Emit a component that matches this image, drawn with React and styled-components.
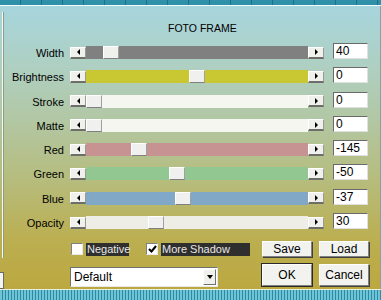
import React from "react";
import styled, { createGlobalStyle } from "styled-components";

const Global = createGlobalStyle`
  html, body { margin: 0; padding: 0; background: #3a9db4; }
  body { font-family: "Liberation Sans", Arial, sans-serif; }
`;

const Screen = styled.div`
  position: relative;
  width: 381px;
  height: 300px;
  overflow: hidden;
  display: flex;
  flex-direction: column;
`;

const TopStrip = styled.div`
  height: 5px;
  background: repeating-linear-gradient(90deg, #2f90aa 0 20px, #1d6f88 20px 21px),
    #3aa0b8;
  border-bottom: 1px solid #f4fbfc;
  flex: none;
`;

const BottomStrip = styled.div`
  height: 10px;
  flex: none;
  border-top: 1px solid #e8eedc;
  background: repeating-linear-gradient(90deg, #6fc4d6 0 2px, #2d8aa4 2px 3px),
    #3aa0b8;
`;

const Dialog = styled.div`
  position: relative;
  flex: 1;
  background: linear-gradient(
    180deg,
    #a7d5dd 0%,
    #aed0c4 20%,
    #b2c7a4 40%,
    #b6bc7c 62%,
    #bbaf52 82%,
    #bca83f 100%
  );
  border-right: 1px solid #8aa0a0;
  padding-top: 16px;
`;

const GroupEdge = styled.div`
  position: absolute;
  left: 2px;
  top: 6px;
  width: 1px;
  height: 246px;
  background: #f4f8f0;
  box-shadow: 1px 0 0 #8e9c8a;
`;

const EdgeButton = styled.div`
  position: absolute;
  left: -2px;
  top: 266px;
  width: 5px;
  height: 15px;
  background: #f4f4f0;
  border: 1px solid #6b6b60;
  border-left: none;
`;

const Title = styled.div`
  font-size: 10.5px;
  color: #000;
  margin-left: 168px;
  height: 24px;
  line-height: 12px;
`;

const Rows = styled.div`
  display: flex;
  flex-direction: column;
`;

const Row = styled.div`
  display: flex;
  align-items: flex-start;
  height: 24.3px;
`;

const Label = styled.div`
  width: 70px;
  padding-right: 6px;
  box-sizing: border-box;
  text-align: right;
  font-size: 11px;
  line-height: 14px;
  color: #000;
`;

const ScrollBar = styled.div`
  display: flex;
  align-items: center;
  width: 254px;
  height: 13px;
`;

const ArrowButton = styled.div`
  width: 16px;
  height: 12px;
  box-sizing: border-box;
  background: #f0f0ec;
  border-top: 1px solid #ffffff;
  border-left: 1px solid #ffffff;
  border-right: 1px solid #9a9a94;
  border-bottom: 2px solid #6e6e68;
  display: flex;
  align-items: center;
  justify-content: center;
  flex: none;
`;

const Tri = styled.div`
  width: 0;
  height: 0;
  border-top: 3px solid transparent;
  border-bottom: 3px solid transparent;
  ${(p) =>
    p.dir === "left"
      ? "border-right: 3px solid #000;"
      : "border-left: 3px solid #000;"}
`;

const Track = styled.div`
  position: relative;
  flex: 1;
  height: 13px;
  background: ${(p) => p.color};
`;

const Thumb = styled.div`
  position: absolute;
  top: 0;
  width: 16px;
  height: 13px;
  box-sizing: border-box;
  background: #f0f0ee;
  border-top: 1px solid #ffffff;
  border-left: 1px solid #ffffff;
  border-right: 1px solid #a0a0a0;
  border-bottom: 1px solid #808080;
`;

const ValueBox = styled.div`
  margin-left: 9px;
  margin-top: -3px;
  width: 35px;
  height: 16px;
  box-sizing: border-box;
  background: #fff;
  border-top: 1px solid #6a6a6a;
  border-left: 1px solid #6a6a6a;
  border-right: 1px solid #e0e0e0;
  border-bottom: 1px solid #e0e0e0;
  font-size: 12px;
  line-height: 14px;
  padding-left: 2px;
  color: #000;
`;

const Lower = styled.div`
  display: grid;
  grid-template-columns: 185px 50px 50px;
  grid-template-rows: 16px 22px;
  column-gap: 7px;
  row-gap: 7px;
  margin-left: 70px;
  margin-top: 1px;
`;

const Checks = styled.div`
  display: flex;
  align-items: center;
`;

const CheckBox = styled.div`
  width: 12px;
  height: 12px;
  box-sizing: border-box;
  margin-left: ${(p) => p.ml || 1}px;
  background: #fff;
  border-top: 1px solid #808080;
  border-left: 1px solid #808080;
  border-right: 1px solid #e8e8e8;
  border-bottom: 1px solid #e8e8e8;
  display: flex;
  align-items: center;
  justify-content: center;
`;

const CheckLabel = styled.div`
  margin-left: ${(p) => p.ml || 3}px;
  width: ${(p) => p.w}px;
  height: 13px;
  background: #2f2f2d;
  color: #e8e8e8;
  font-size: 11px;
  line-height: 13px;
  padding-left: 1px;
  box-sizing: border-box;
  white-space: nowrap;
`;

const Button = styled.div`
  box-sizing: border-box;
  height: ${(p) => (p.big ? 22 : 16)}px;
  background: #f2f2ee;
  border-top: 1px solid #ffffff;
  border-left: 1px solid #ffffff;
  border-right: 1px solid #808080;
  border-bottom: 1px solid #808080;
  box-shadow: ${(p) =>
    p.primary ? "0 0 0 1px #2a2a2a" : "1px 1px 0 #404040"};
  font-size: 12px;
  display: flex;
  align-items: center;
  justify-content: center;
  color: #000;
`;

const Select = styled.div`
  align-self: end;
  margin-bottom: -1px;
  width: 148px;
  height: 20px;
  box-sizing: border-box;
  background: #fff;
  border-top: 1px solid #707070;
  border-left: 1px solid #707070;
  border-right: 1px solid #e8e8e8;
  border-bottom: 1px solid #e8e8e8;
  display: flex;
  align-items: center;
  font-size: 12px;
  padding-left: 3px;
  color: #000;
`;

const SelectText = styled.span`
  flex: 1;
`;

const SelectArrow = styled.div`
  width: 13px;
  height: 16px;
  box-sizing: border-box;
  margin-right: 1px;
  background: #f0f0ec;
  border-top: 1px solid #fff;
  border-left: 1px solid #fff;
  border-right: 1px solid #707070;
  border-bottom: 1px solid #707070;
  display: flex;
  align-items: center;
  justify-content: center;
`;

const Down = styled.div`
  width: 0;
  height: 0;
  border-left: 3.5px solid transparent;
  border-right: 3.5px solid transparent;
  border-top: 4px solid #000;
`;

const sliders = [
  { label: "Width", color: "#808080", pos: 17, value: "40" },
  { label: "Brightness", color: "#c9c833", pos: 103, value: "0" },
  { label: "Stroke", color: "#f6f6f0", pos: 0, value: "0" },
  { label: "Matte", color: "#f6f6f0", pos: 0, value: "0" },
  { label: "Red", color: "#c69292", pos: 45, value: "-145" },
  { label: "Green", color: "#92c792", pos: 83, value: "-50" },
  { label: "Blue", color: "#82a8c8", pos: 89, value: "-37" },
  { label: "Opacity", color: "#eeeee6", pos: 62, value: "30" },
];

export default function App() {
  return (
    <Screen>
      <Global />
      <TopStrip />
      <Dialog>
        <GroupEdge />
        <EdgeButton />
        <Title>FOTO FRAME</Title>
        <Rows>
          {sliders.map((s) => (
            <Row key={s.label}>
              <Label>{s.label}</Label>
              <ScrollBar>
                <ArrowButton>
                  <Tri dir="left" />
                </ArrowButton>
                <Track color={s.color}>
                  <Thumb style={{ left: s.pos }} />
                </Track>
                <ArrowButton>
                  <Tri dir="right" />
                </ArrowButton>
              </ScrollBar>
              <ValueBox>{s.value}</ValueBox>
            </Row>
          ))}
        </Rows>
        <Lower>
          <Checks>
            <CheckBox />
            <CheckLabel w={43}>Negative</CheckLabel>
            <CheckBox ml={17}>
              <svg width="9" height="8" viewBox="0 0 9 8">
                <path d="M1 4 L3.5 6.5 L8 1" stroke="#000" strokeWidth="2" fill="none" />
              </svg>
            </CheckBox>
            <CheckLabel ml={3} w={89}>More Shadow</CheckLabel>
          </Checks>
          <Button>Save</Button>
          <Button>Load</Button>
          <Select>
            <SelectText>Default</SelectText>
            <SelectArrow>
              <Down />
            </SelectArrow>
          </Select>
          <Button big primary>OK</Button>
          <Button big>Cancel</Button>
        </Lower>
      </Dialog>
      <BottomStrip />
    </Screen>
  );
}
